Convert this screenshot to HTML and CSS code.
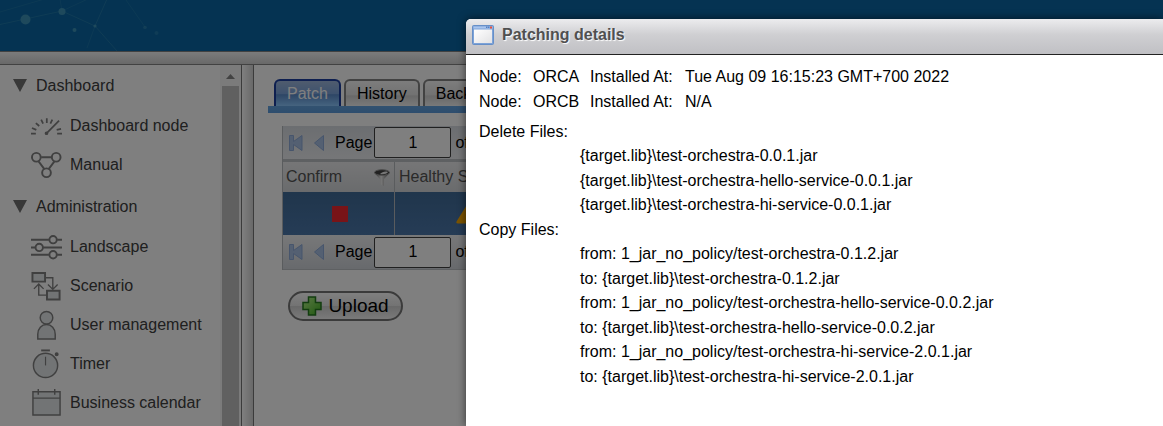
FILE: index.html
```html
<!DOCTYPE html>
<html lang="en">
<head>
<meta charset="utf-8">
<title>Patching details</title>
<link rel="stylesheet" href="styles.css">
</head>
<body>
<div class="app">
  <header class="banner">
    <svg class="network" width="200" height="51" viewBox="0 0 200 51" aria-hidden="true">
      <g fill="none" stroke="#2f86ad" stroke-width="1">
        <path d="M0 24.500 62 11 95 26" opacity=".55"/>
        <path d="M0 12 48-2M62 11 60-1M62 11 90-2" opacity=".4"/>
        <path d="M107-1 95 26 117 51" opacity=".6"/>
        <path d="M95 26 87 48M126 0 145 27" opacity=".4"/>
      </g>
      <g fill="#3d93b8">
        <circle cx="25.500" cy="19.500" r="5"/><circle cx="62" cy="11.500" r="3.500"/>
        <circle cx="95" cy="26" r="1.600"/><circle cx="74.500" cy="30" r="2"/>
        <circle cx="145" cy="27.500" r="1.800" opacity=".5"/><circle cx="156.500" cy="33" r="2" opacity=".4"/>
      </g>
    </svg>
  </header>
  <div class="divider"></div>
  <div class="workspace">
    <nav class="sidebar" aria-label="Main">
      <div class="menu">
        <section class="group">
          <h2 class="group-title"><svg width="14" height="13" viewBox="0 0 14 13"><path d="M0 0h14L7 13z" fill="#707070"/></svg>Dashboard</h2>
          <a class="item" href="#"><svg class="icon" viewBox="0 0 32 32"><g stroke-width="1.800"><path d="M0 24.500h5M1 18.500l4.500 2M5 13.500l3.500 3M10.500 10l2 4M16.300 8.500v5M22 10l-2 4M32 24.500h-5M31 19.500l-4.500 1M29 11 16.500 23.500"/><circle cx="16" cy="24" r="1" fill="#808080"/></g></svg>Dashboard node</a>
          <a class="item" href="#"><svg class="icon bold" viewBox="0 0 32 32"><path d="M10.500 8.500h11M8 13l6 8M24 13l-6 8"/><circle cx="5.500" cy="8.500" r="4.500"/><circle cx="26" cy="8.500" r="4.500"/><circle cx="16" cy="24.500" r="4.500"/></svg>Manual</a>
        </section>
        <section class="group">
          <h2 class="group-title"><svg width="14" height="13" viewBox="0 0 14 13"><path d="M0 0h14L7 13z" fill="#707070"/></svg>Administration</h2>
          <a class="item" href="#"><svg class="icon bold" viewBox="0 0 32 32"><path d="M0 9h18.500M27 9h5M0 17h4.500M12.500 17H32M0 24.500h18.500M27 24.500h5"/><circle cx="22.800" cy="9" r="3.800"/><circle cx="8.500" cy="17" r="3.800"/><circle cx="22.800" cy="24.500" r="3.800"/></svg>Landscape</a>
          <a class="item" href="#"><svg class="icon" viewBox="0 0 32 32"><path class="shade" stroke-width="2" d="M1.500 3h13v9h-13zM16.500 21.500h13v9h-13z"/><path stroke-width="1.400" d="M15 8h7.500v12M17.500 15l5 5 5-5M16 26H8V14M3 19.500l5-5 5 5"/></svg>Scenario</a>
          <a class="item" href="#"><svg class="icon" viewBox="0 0 32 32"><path class="shade" d="M7 31v-5c0-6 4-10 9-10s9 4 9 10v5z"/><circle class="shade" cx="16" cy="9" r="6.500"/></svg>User management</a>
          <a class="item" href="#"><svg class="icon" viewBox="0 0 32 32"><circle class="shade" cx="15" cy="18" r="12.500"/><path d="M15 9v9" stroke-width="1.200"/><path stroke-width="2" d="M10.500 2.500h9"/><circle cx="26.500" cy="6.500" r="1.300" fill="#808080"/></svg>Timer</a>
          <a class="item" href="#"><svg class="icon" viewBox="0 0 32 32"><path class="shade" d="M2 5h28v24H2z"/><path d="M2 11.500h28M7.500 2v6M24.500 2v6"/></svg>Business calendar</a>
        </section>
      </div>
      <div class="scrollbar" aria-hidden="true"><svg width="9" height="5" viewBox="0 0 9 5"><path d="M0 5 4.500 0 9 5z" fill="#858585"/></svg><div class="thumb"></div></div>
    </nav>
    <div class="splitter"></div>
    <main class="main">
      <div class="tabs" role="tablist">
        <button class="tab active" role="tab" aria-selected="true">Patch</button>
        <button class="tab" role="tab">History</button>
        <button class="tab" role="tab">Back</button>
      </div>
      <div class="panel">
        <div class="pager">
          <svg width="14" height="16" viewBox="0 0 14 16"><path d="M.5.500h4v6L13 .500v15L4.500 9.500v6h-4z" fill="#a8c0e4" stroke="#8eabd8"/></svg>
          <svg width="10" height="16" viewBox="0 0 10 16"><path d="M9.500.500v15L.5 8z" fill="#a8c0e4" stroke="#8eabd8"/></svg>
          <label>Page <input class="page" type="text" value="1"></label><span>of</span>
        </div>
        <table class="grid">
          <thead><tr><th class="confirm"><div class="head">Confirm <svg width="16" height="17" viewBox="0 0 16 17"><defs><linearGradient id="metal"><stop stop-color="#555"/><stop offset=".45" stop-color="#eee"/><stop offset="1" stop-color="#555"/></linearGradient></defs><path d="M0 3.500 6 10v5l4 2v-7l6-6.500z" fill="url(#metal)"/><ellipse cx="8" cy="3.500" rx="7.500" ry="2.800" fill="#444" stroke="#999"/><path d="M6 5c3 .5 7 0 8-2-3-1-6 0-8 2z" fill="#eee"/></svg></div></th><th>Healthy S</th></tr></thead>
          <tbody><tr><td class="confirm"><span class="stop"></span></td><td class="health"><svg width="24" height="20" viewBox="0 0 24 20"><path d="M10.500 1.500q1.500-2 3 0l10 16q.5 2-1.500 2H2q-2 0-1.500-2z" fill="#f8a800"/></svg></td></tr></tbody>
        </table>
        <div class="pager bottom">
          <svg width="14" height="16" viewBox="0 0 14 16"><path d="M.5.500h4v6L13 .500v15L4.500 9.500v6h-4z" fill="#a8c0e4" stroke="#8eabd8"/></svg>
          <svg width="10" height="16" viewBox="0 0 10 16"><path d="M9.500.500v15L.5 8z" fill="#a8c0e4" stroke="#8eabd8"/></svg>
          <label>Page <input class="page" type="text" value="1"></label><span>of</span>
        </div>
      </div>
      <button class="upload"><svg width="20" height="20" viewBox="0 0 20 20"><defs><linearGradient id="leaf" x2="1" y2="1"><stop stop-color="#b8f48c"/><stop offset="1" stop-color="#40b020"/></linearGradient></defs><path d="M6.500 1h7v5.500H19v7h-5.500V19h-7v-5.500H1v-7h5.500z" fill="url(#leaf)" stroke="#267a20" stroke-width="1.500"/></svg>Upload</button>
    </main>
  </div>
</div>
<div class="overlay"></div>
<section class="dialog" role="dialog" aria-labelledby="dialog-title">
  <header class="dialog-bar">
    <svg width="22" height="20" viewBox="0 0 22 20" aria-hidden="true"><defs><linearGradient id="pane" x2="1" y2="1"><stop stop-color="#fff"/><stop offset="1" stop-color="#e2e2e4"/></linearGradient></defs><rect x=".5" y=".5" width="21" height="19" rx="1" fill="#7da3d8" stroke="#668fc8"/><path d="M1.500 1.500h19v2h-19z" fill="#a9c5ee"/><path d="M2 4.500h18V18H2z" fill="url(#pane)"/><path d="M18 1.500h2v2h-2z" fill="#e8503c"/><path d="M14 1.500h1.500v1.500H14zM16 1.500h1.500v1.500H16z" fill="#547fc0"/></svg>
    <h1 id="dialog-title">Patching details</h1>
  </header>
  <div class="dialog-body">
    <div class="nodes">
      <span>Node:</span><span>ORCA</span><span>Installed At:</span><span>Tue Aug 09 16:15:23 GMT+700 2022</span>
      <span>Node:</span><span>ORCB</span><span>Installed At:</span><span>N/A</span>
    </div>
    <h2>Delete Files:</h2>
    <ul class="files">
      <li>{target.lib}\test-orchestra-0.0.1.jar</li>
      <li>{target.lib}\test-orchestra-hello-service-0.0.1.jar</li>
      <li>{target.lib}\test-orchestra-hi-service-0.0.1.jar</li>
    </ul>
    <h2>Copy Files:</h2>
    <ul class="files">
      <li>from: 1_jar_no_policy/test-orchestra-0.1.2.jar</li>
      <li>to: {target.lib}\test-orchestra-0.1.2.jar</li>
      <li>from: 1_jar_no_policy/test-orchestra-hello-service-0.0.2.jar</li>
      <li>to: {target.lib}\test-orchestra-hello-service-0.0.2.jar</li>
      <li>from: 1_jar_no_policy/test-orchestra-hi-service-2.0.1.jar</li>
      <li>to: {target.lib}\test-orchestra-hi-service-2.0.1.jar</li>
    </ul>
  </div>
</section>
</body>
</html>
```

FILE: styles.css
```css
* { box-sizing: border-box; }
body {
  margin: 0;
  overflow: hidden;
  font: 16px/24px "Liberation Sans", Arial, sans-serif;
  color: #000;
}
svg { display: block; flex: none; }
h1, h2 { margin: 0; font-size: 16px; font-weight: normal; }
button, input { font: inherit; }

.app { display: flex; flex-direction: column; height: 100vh; background: #fff; }
.banner { flex: none; height: 51px; background: #0a66a5; }
.divider {
  flex: none;
  height: 14px;
  border-top: 1px solid #858585;
  border-bottom: 1px solid #858585;
  background: linear-gradient(#f8f8f8, #d2d2d2);
}
.workspace { display: flex; flex: 1; min-height: 0; }

.sidebar { display: flex; flex: none; width: 241px; overflow: hidden; }
.menu { flex: 1; }
.group { margin-bottom: 2px; }
.group-title {
  display: flex;
  align-items: center;
  gap: 9px;
  height: 41px;
  padding-left: 13px;
  color: #404040;
}
.item {
  display: flex;
  align-items: center;
  gap: 8px;
  height: 39px;
  padding-left: 31px;
  color: #404040;
  text-decoration: none;
  white-space: nowrap;
}
.icon { width: 31px; height: 31px; fill: none; stroke: #808080; stroke-width: 1.5; }
.icon.bold { stroke-width: 2; }
.shade { fill: #e4e8ea; }
.scrollbar {
  display: flex;
  flex-direction: column;
  align-items: center;
  gap: 7px;
  width: 21px;
  padding: 9px 2px 0;
  background: #f6f6f6;
}
.thumb { width: 17px; flex: 1; background: #c1c1c1; }
.splitter {
  flex: none;
  width: 13px;
  border-left: 1px solid #777;
  border-right: 1px solid #777;
  background: linear-gradient(90deg, #fff, #d2d2d2);
}

.main { flex: 1; min-width: 0; padding: 14px 0 0 14px; }
.tabs {
  display: flex;
  gap: 3px;
  padding-left: 6px;
  border-bottom: 7px solid #78b4e8;
  border-image: linear-gradient(#86c8f4, #5c9bdc) 7;
}
.tab {
  height: 27px;
  padding: 0 11px;
  border: 2px solid #858585;
  border-bottom: 0;
  border-radius: 6px 6px 0 0;
  background: linear-gradient(#fafafa, #e4e4e4 55%, #d2d2d2 60%, #f4f4f4);
  color: #000;
}
.tab.active {
  border-color: #1c3fa0;
  background: linear-gradient(#a0b8dc, #7ca4dc 50%, #5c8ccc 55%, #8cc8ff);
  color: #fff;
}
.panel { margin: 13px 0 0 14px; border-left: 1px solid #b4b8bc; }
.pager {
  display: flex;
  align-items: center;
  height: 36px;
  padding-left: 6px;
  gap: 11px;
  border-bottom: 3px solid #bcc0c4;
  background: linear-gradient(#d8dce2, #eceef1);
}
.pager label { display: flex; align-items: center; gap: 2px; }
.pager span { margin-left: -7px; }
.page {
  width: 77px;
  height: 31px;
  padding: 0;
  border: 1px solid #404040;
  border-radius: 2px;
  background: #fff;
  color: #000;
  text-align: center;
}
.pager.bottom { height: 35px; border-bottom-width: 1px; background: linear-gradient(#f0f1f3, #d0d4da); }
.grid { width: 100%; border-collapse: separate; border-spacing: 0; table-layout: fixed; }
.grid th {
  height: 30px;
  padding: 0 4px;
  background: linear-gradient(#ececee, #d4d7da);
  color: #555;
  font-weight: normal;
  text-align: left;
  white-space: nowrap;
}
.grid td { height: 43px; padding: 0; background: linear-gradient(#406c98, #4c78ac); vertical-align: middle; }
.grid .confirm { width: 112px; padding-left: 3px; border-right: 1px solid #b4b8bc; }
.head { display: flex; align-items: center; justify-content: space-between; }
.stop { display: block; width: 16px; height: 16px; margin: 0 auto; background: #f02830; }
.grid .health { padding-left: 61px; }
.upload {
  display: flex;
  align-items: center;
  justify-content: center;
  gap: 6px;
  width: 115px;
  height: 30px;
  margin: 21px 0 0 20px;
  padding: 0;
  border: 2px solid #777;
  border-radius: 15px;
  background: linear-gradient(#fff, #e8e8e8 48%, #d2d2d2 52%, #f4f4f4);
  color: #000;
  font-size: 19px;
}

.overlay { position: absolute; inset: 0; background: rgba(0, 0, 0, .5); }
.dialog {
  position: absolute;
  inset: 19px 0 0 466px;
  overflow: hidden;
  border-radius: 5px 0 0 0;
  background: #fff;
  box-shadow: 0 0 8px rgba(0, 0, 0, .6);
}
.dialog-bar {
  display: flex;
  align-items: center;
  gap: 8px;
  height: 36px;
  padding: 0 6px 4px;
  border-bottom: 1px solid #222;
  background: linear-gradient(#ececee, #cfcfd2 45%, #c0c0c4);
}
.dialog-bar h1 { color: #505050; font-weight: bold; text-shadow: 1px 1px 1px #fff; }
.dialog-body { padding: 10px 13px; }
.nodes { display: grid; grid-template-columns: 54px 57px 95px 1fr; row-gap: 1px; margin-bottom: 6px; }
.files { margin: 0 0 1px; padding: 0 0 0 101px; list-style: none; }
.files li:nth-child(even) { padding-top: 1px; }
```
